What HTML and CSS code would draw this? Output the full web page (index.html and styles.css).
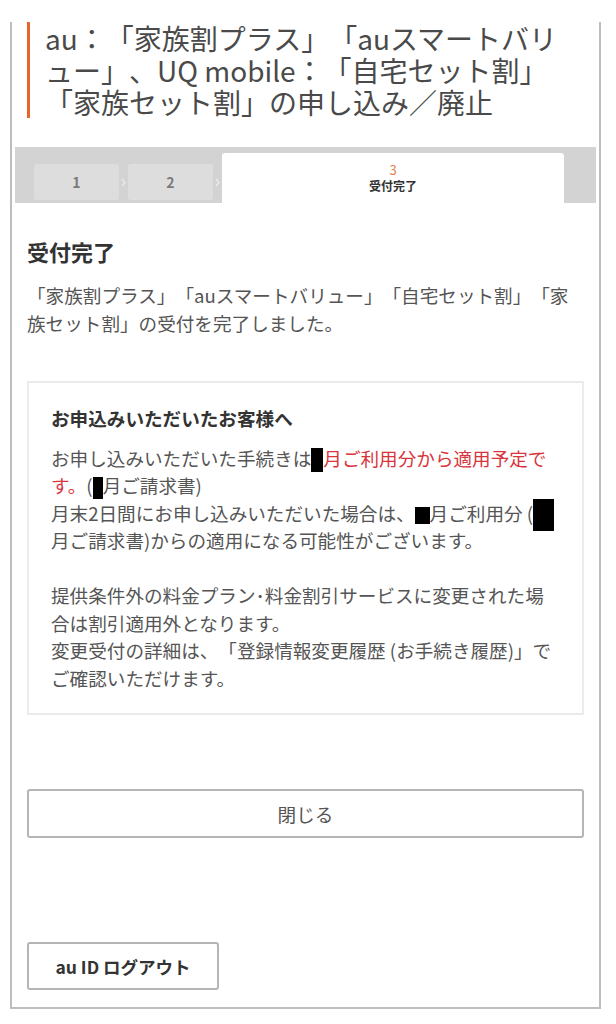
FILE: index.html
```html
<!DOCTYPE html>
<html lang="ja">
<head>
<meta charset="utf-8">
<title>受付完了</title>
<link rel="stylesheet" href="styles.css">
</head>
<body>
<div class="frame">
  <h1 class="title">au：「家族割プラス」「auスマートバリュー」、UQ mobile：「自宅セット割」「家族セット割」の申し込み／廃止</h1>
  <div class="steps">
    <div class="step">1</div>
    <span class="chev"><svg width="5" height="9" viewBox="0 0 5 9"><path d="M1 1l3 3.5L1 8" fill="none" stroke="#ececec" stroke-width="1.2"/></svg></span>
    <div class="step">2</div>
    <span class="chev"><svg width="5" height="9" viewBox="0 0 5 9"><path d="M1 1l3 3.5L1 8" fill="none" stroke="#ececec" stroke-width="1.2"/></svg></span>
    <div class="step active"><span class="num">3</span><span class="lbl">受付完了</span></div>
  </div>
  <section class="content">
    <h2 class="heading">受付完了</h2>
    <p class="lead">「家族割プラス」「auスマートバリュー」「自宅セット割」「家族セット割」の受付を完了しました。</p>
    <div class="notice">
      <h3 class="notice-title">お申込みいただいたお客様へ</h3>
      <p class="notice-text">お申し込みいただいた手続きは<span class="mask m1"></span><span class="red">月ご利用分から適用予定です。</span>(<span class="mask m2"></span>月ご請求書)<br>月末2日間にお申し込みいただいた場合は、<span class="mask m3"></span>月ご利用分 (<span class="mask m4"></span>月ご請求書)からの適用になる可能性がございます。</p>
      <p class="notice-text gap">提供条件外の料金プラン･料金割引サービスに変更された場合は割引適用外となります。<br>変更受付の詳細は、「登録情報変更履歴 (お手続き履歴)」でご確認いただけます。</p>
    </div>
    <button class="btn btn-close" type="button">閉じる</button>
    <button class="btn btn-logout" type="button">au ID ログアウト</button>
  </section>
</div>
</body>
</html>
```
FILE: styles.css
```css
* { box-sizing: border-box; }
html, body { margin: 0; padding: 0; background: #fff; }
body {
  font-family: "Noto Sans CJK JP", "Noto Sans", sans-serif;
  color: #555;
  text-spacing-trim: space-all;
  line-break: normal;
}
.frame {
  margin-left: 10px;
  width: 591px;
  border: 2px solid #bdbdbd;
  border-top: none;
  padding-bottom: 17px;
}
.title {
  margin: 22px 30px 0 15px;
  border-left: 3px solid #e5662c;
  padding-left: 15px;
  font-size: 28px;
  line-height: 32px;
  font-weight: normal;
  color: #4a4a4a;
}
.steps {
  margin: 29px 3px 0;
  height: 56px;
  background: #d3d3d3;
  display: flex;
  align-items: flex-end;
  padding-left: 19px;
}
.step {
  width: 85px;
  height: 36px;
  margin-bottom: 3px;
  background: #dddddd;
  border-radius: 3px;
  display: flex;
  align-items: center;
  justify-content: center;
  font-weight: bold;
  font-size: 14px;
  color: #7a7a7a;
}
.chev {
  width: 9px;
  height: 36px;
  margin-bottom: 3px;
  display: flex;
  align-items: center;
  justify-content: center;
}
.chev svg { display: block; }
.step.active {
  width: 342px;
  height: 50px;
  margin-bottom: 0;
  background: #fff;
  border-radius: 3px 3px 0 0;
  flex-direction: column;
}
.num {
  font-size: 13px;
  line-height: 16px;
  font-weight: normal;
  color: #e8804a;
}
.lbl {
  font-size: 12px;
  line-height: 16px;
  font-weight: bold;
  color: #333;
}
.content { padding: 0 15px; }
.heading {
  margin: 33px 0 0;
  font-size: 22px;
  line-height: 30px;
  font-weight: bold;
  color: #333;
}
.lead {
  margin: 15px 0 0;
  font-size: 18.6px;
  line-height: 27.5px;
}
.notice {
  margin-top: 45px;
  border: 2px solid #ebebeb;
  padding: 21px 24px 22px 22px;
}
.notice-title {
  margin: 0;
  font-size: 18.6px;
  line-height: 27.5px;
  font-weight: bold;
  color: #333;
}
.notice-text {
  margin: 12px 0 0;
  font-size: 18.6px;
  line-height: 27.5px;
}
.notice-text.gap { margin-top: 27.5px; }
.red { color: #d8343c; }
.mask {
  display: inline-block;
  background: #000;
  vertical-align: middle;
}
.m1 { width: 12px; height: 24px; margin: -5px 0; }
.m2 { width: 10px; height: 22px; margin: -4px 0; }
.m3 { width: 15px; height: 17px; }
.m4 { width: 21px; height: 32px; margin: -8px 0; }
.btn {
  display: block;
  font: inherit;
  background: #fff;
  border: 2px solid #b5b5b5;
  border-radius: 3px;
  padding: 0;
  cursor: pointer;
}
.btn-close {
  margin-top: 74px;
  width: 100%;
  height: 49px;
  font-size: 18.6px;
  color: #555;
}
.btn-logout {
  margin-top: 104px;
  width: 192px;
  height: 48px;
  font-size: 17.5px;
  font-weight: bold;
  color: #333;
}
```
